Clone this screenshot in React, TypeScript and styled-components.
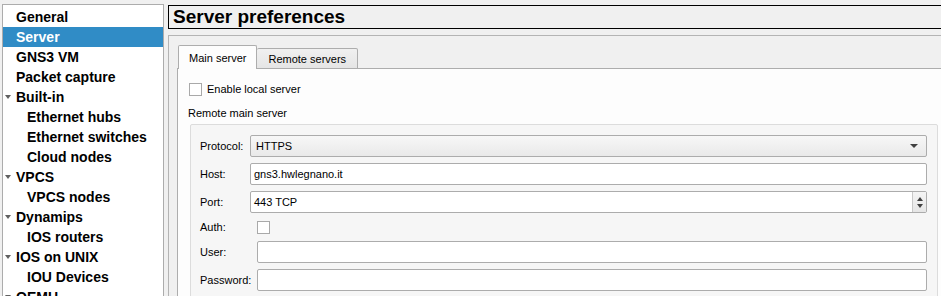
import React from 'react';
import styled, { createGlobalStyle } from 'styled-components';

const GlobalStyle = createGlobalStyle`
    html, body {
        margin:0;
        padding:0;
        background:#f0f0f0;
        font-family:"Liberation Sans", Arial, sans-serif;
        font-size:11px;
        color:#000;
    }
`

const Window = styled.div`
    display:flex;
    gap:4px;
    width:941px;
    height:296px;
    padding:4px 0 0 2px;
    box-sizing:border-box;
    overflow:hidden;
`

const Tree = styled.ul`
    flex:0 0 162px;
    box-sizing:border-box;
    margin:0;
    padding:2px 0 0;
    list-style:none;
    background:#fff;
    border:1px solid #acacac;
    border-bottom:none;
`

const TreeRow = styled.li<{ $depth: number; $selected?: boolean }>`
    position:relative;
    display:flex;
    align-items:center;
    height:20px;
    padding-left:${({ $depth }) => ($depth ? 24 : 13)}px;
    font-weight:700;
    font-size:14px;
    background:${({ $selected }) => ($selected ? '#308cc6' : 'transparent')};
    color:${({ $selected }) => ($selected ? '#fff' : '#000')};
`

const Arrow = styled.span`
    position:absolute;
    left:2px;
    top:8px;
    width:0;
    height:0;
    border-left:3.5px solid transparent;
    border-right:3.5px solid transparent;
    border-top:4px solid #606060;
`

const Right = styled.div`
    flex:0 0 782px;
    display:flex;
    flex-direction:column;
    gap:6px;
    padding-top:1px;
`

const TitleBox = styled.div`
    height:25px;
    box-sizing:border-box;
    border:1px solid #000;
    display:flex;
    align-items:center;
    padding-left:4px;
    font-weight:700;
    font-size:19px;
`

const Panel = styled.div`
    flex:1;
    border-top:1px solid #b4b4b4;
    border-left:1px solid #b4b4b4;
    padding:10px 0 0 8px;
    display:flex;
    flex-direction:column;
`

const TabBar = styled.div`
    display:flex;
    align-items:flex-end;
    height:23px;
    padding-left:1px;
    position:relative;
    z-index:1;
    margin-bottom:-1px;
`

const Tab = styled.div<{ $active?: boolean }>`
    box-sizing:border-box;
    display:flex;
    align-items:center;
    justify-content:center;
    height:${({ $active }) => ($active ? 24 : 21)}px;
    padding:0 ${({ $active }) => ($active ? 10 : 11)}px;
    border:1px solid #adadad;
    border-bottom:${({ $active }) => ($active ? 'none' : '1px solid #adadad')};
    border-left:${({ $active }) => ($active ? '1px solid #adadad' : 'none')};
    border-radius:2px 2px 0 0;
    background:${({ $active }) => ($active ? '#fdfdfd' : 'linear-gradient(#f0f0f0, #e5e5e5)')};
    font-size:11px;
`

const Pane = styled.div`
    flex:1;
    background:#fdfdfd;
    border-top:1px solid #adadad;
    border-left:1px solid #adadad;
    padding:13px 12px 0 11px;
`

const CheckRow = styled.label`
    display:flex;
    align-items:center;
    gap:5px;
    height:14px;
`

const Box = styled.span`
    display:inline-block;
    width:13px;
    height:13px;
    box-sizing:border-box;
    border:1px solid #a9a9a9;
    background:#fff;
`

const Caption = styled.div`
    margin:10px 0 0 -1px;
    height:14px;
    display:flex;
    align-items:center;
`

const Group = styled.div`
    margin:4px 0 0 1px;
    padding:10px 10px 6px 9px;
    background:#f6f6f6;
    border:1px solid #dcdcdc;
    border-radius:2px;
    display:grid;
    grid-template-columns:50px 1fr;
    row-gap:6px;
`

const Label = styled.div<{ $short?: boolean }>`
    display:flex;
    align-items:center;
    height:${({ $short }) => ($short ? 16 : 22)}px;
    white-space:nowrap;
`

const Field = styled.div<{ $offset: number }>`
    margin-left:${({ $offset }) => $offset}px;
    height:22px;
    box-sizing:border-box;
    border:1px solid #acacac;
    border-radius:2px;
    background:#fff;
    display:flex;
    align-items:center;
    padding-left:3px;
`

const Combo = styled(Field)`
    background:linear-gradient(#f7f7f7, #e9e9e9);
    padding-left:5px;
    justify-content:space-between;
`

const DropArrow = styled.span`
    margin-right:8px;
    width:0;
    height:0;
    border-left:4px solid transparent;
    border-right:4px solid transparent;
    border-top:4px solid #404040;
`

const Spin = styled.div`
    margin-left:auto;
    align-self:stretch;
    width:13px;
    border-left:1px solid #c8c8c8;
    background:linear-gradient(#f4f4f4, #e6e6e6);
    display:flex;
    flex-direction:column;
    align-items:center;
    justify-content:center;
    gap:3px;
`

const SpinUp = styled.span`
    width:0;
    height:0;
    border-left:3.5px solid transparent;
    border-right:3.5px solid transparent;
    border-bottom:4px solid #404040;
`

const SpinDown = styled.span`
    width:0;
    height:0;
    border-left:3.5px solid transparent;
    border-right:3.5px solid transparent;
    border-top:4px solid #404040;
`

const AuthCell = styled.div`
    display:flex;
    align-items:center;
    height:16px;
    margin-left:7px;
`

const items: { text: string; depth: number; parent?: boolean }[] = [
    { text: 'General', depth: 0 },
    { text: 'Server', depth: 0 },
    { text: 'GNS3 VM', depth: 0 },
    { text: 'Packet capture', depth: 0 },
    { text: 'Built-in', depth: 0, parent: true },
    { text: 'Ethernet hubs', depth: 1 },
    { text: 'Ethernet switches', depth: 1 },
    { text: 'Cloud nodes', depth: 1 },
    { text: 'VPCS', depth: 0, parent: true },
    { text: 'VPCS nodes', depth: 1 },
    { text: 'Dynamips', depth: 0, parent: true },
    { text: 'IOS routers', depth: 1 },
    { text: 'IOS on UNIX', depth: 0, parent: true },
    { text: 'IOU Devices', depth: 1 },
    { text: 'QEMU', depth: 0, parent: true },
]

const App = () => {
    return (
        <Window>
            <GlobalStyle />
            <Tree>
                {items.map((it) => (
                    <TreeRow key={it.text} $depth={it.depth} $selected={it.text === 'Server'}>
                        {it.parent && <Arrow />}
                        {it.text}
                    </TreeRow>
                ))}
            </Tree>
            <Right>
                <TitleBox>Server preferences</TitleBox>
                <Panel>
                    <TabBar>
                        <Tab $active>Main server</Tab>
                        <Tab>Remote servers</Tab>
                    </TabBar>
                    <Pane>
                        <CheckRow>
                            <Box />
                            Enable local server
                        </CheckRow>
                        <Caption>Remote main server</Caption>
                        <Group>
                            <Label>Protocol:</Label>
                            <Combo $offset={0}>
                                HTTPS
                                <DropArrow />
                            </Combo>
                            <Label>Host:</Label>
                            <Field $offset={0}>gns3.hwlegnano.it</Field>
                            <Label>Port:</Label>
                            <Field $offset={0}>
                                443 TCP
                                <Spin>
                                    <SpinUp />
                                    <SpinDown />
                                </Spin>
                            </Field>
                            <Label $short>Auth:</Label>
                            <AuthCell>
                                <Box />
                            </AuthCell>
                            <Label>User:</Label>
                            <Field $offset={7} />
                            <Label>Password:</Label>
                            <Field $offset={7} />
                        </Group>
                    </Pane>
                </Panel>
            </Right>
        </Window>
    );
}

export default App;
